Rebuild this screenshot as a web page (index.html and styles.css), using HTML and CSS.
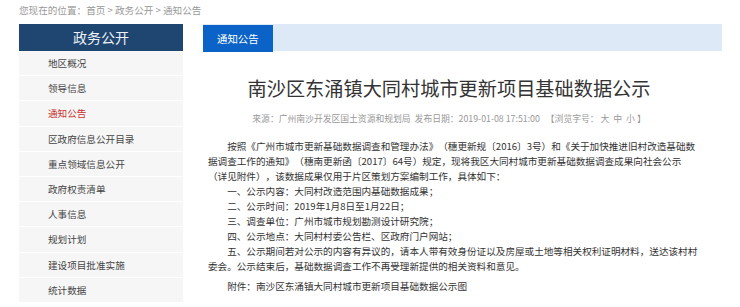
FILE: index.html
```html
<!DOCTYPE html>
<html lang="zh-CN">
<head>
  <meta charset="UTF-8" />
  <meta name="viewport" content="width=device-width, initial-scale=1.0"/>
  <title>通知公告 - 政务公开</title>
  <link rel="stylesheet" href="styles.css">
</head>
<body>

  <div class="page">
    <div class="crumb">您现在的位置：首页 &gt; 政务公开 &gt; 通知公告</div>

    <div class="wrap">
      <aside class="side">
        <div class="side-title">政务公开</div>
        <ul class="side-menu">
          <li><a href="#">地区概况</a></li>
          <li><a href="#">领导信息</a></li>
          <li><a href="#" class="active">通知公告</a></li>
          <li><a href="#">区政府信息公开目录</a></li>
          <li><a href="#">重点领域信息公开</a></li>
          <li><a href="#">政府权责清单</a></li>
          <li><a href="#">人事信息</a></li>
          <li><a href="#">规划计划</a></li>
          <li><a href="#">建设项目批准实施</a></li>
          <li><a href="#">统计数据</a></li>
        </ul>
      </aside>

      <main class="main">
        <div class="tabbar">
          <span class="tab">通知公告</span>
        </div>

        <div class="article">
          <h1>南沙区东涌镇大同村城市更新项目基础数据公示</h1>
          <div class="meta">
            来源：广州南沙开发区国土资源和规划局&nbsp;&nbsp;发布日期：2019-01-08 17:51:00&nbsp;&nbsp;&nbsp;【浏览字号：&nbsp;<a href="#">大</a>&nbsp;&nbsp;<a href="#">中</a>&nbsp;&nbsp;<a href="#">小</a>&nbsp;】
          </div>
          <div class="content">
            <p>按照《广州市城市更新基础数据调查和管理办法》（穗更新规〔2016〕3号）和《关于加快推进旧村改造基础数据调查工作的通知》（穗南更新函〔2017〕64号）规定，现将我区大同村城市更新基础数据调查成果向社会公示<br>（详见附件），该数据成果仅用于片区策划方案编制工作，具体如下：</p>
            <p>一、公示内容：大同村改造范围内基础数据成果；</p>
            <p>二、公示时间：2019年1月8日至1月22日；</p>
            <p>三、调查单位：广州市城市规划勘测设计研究院；</p>
            <p>四、公示地点：大同村村委公告栏、区政府门户网站；</p>
            <p>五、公示期间若对公示的内容有异议的，请本人带有效身份证以及房屋或土地等相关权利证明材料，送达该村村委会。公示结束后，基础数据调查工作不再受理新提供的相关资料和意见。</p>
            <p class="attach">附件：<a href="#">南沙区东涌镇大同村城市更新项目基础数据公示图</a></p>
          </div>
        </div>
      </main>
    </div>
  </div>

</body>
</html>
```

FILE: styles.css
```css
* { box-sizing: border-box; }
body {
  margin: 0;
  font-family: "Noto Sans CJK SC", "Microsoft YaHei", sans-serif;
  background: #fff;
  color: #333;
  text-spacing-trim: space-all;
}

a {
  color: inherit;
  text-decoration: none;
}

.page {
  width: 703px;
  margin-left: 19px;
}

.crumb {
  font-size: 9.6px;
  line-height: 20px;
  color: #999;
}

.wrap {
  display: flex;
  gap: 20px;
  margin-top: 4px;
}

/* left menu */
.side {
  width: 164px;
  flex-shrink: 0;
}

.side-title {
  height: 27px;
  line-height: 27px;
  background: #1f4670;
  color: #eef2f7;
  font-size: 14px;
  text-align: center;
}

.side-menu {
  list-style: none;
  margin: 0;
  padding: 0;
  background: #f6f6f6;
}

.side-menu li {
  border-bottom: 1px solid #fff;
}

.side-menu a {
  display: block;
  height: 24.2px;
  line-height: 24.2px;
  padding-left: 29px;
  font-size: 9.6px;
  color: #444;
}

.side-menu a.active {
  color: #c9302c;
}

/* right column */
.main {
  flex: 1;
}

.tabbar {
  height: 27px;
  background: #dde9f6;
}

.tab {
  display: inline-block;
  height: 27px;
  line-height: 27px;
  padding: 0 14px;
  background: #0b63c7;
  color: #fff;
  font-size: 10.4px;
}

.article {
  padding: 0 32px 0 5px;
}

.article h1 {
  margin: 23px 0 0;
  font-size: 19.2px;
  line-height: 28px;
  font-weight: normal;
  text-align: center;
  color: #333;
}

.meta {
  margin-top: 9px;
  font-size: 8.8px;
  line-height: 15px;
  color: #999;
  text-align: center;
}

.content {
  margin: 13px -9px 0 0;
  font-size: 9.6px;
  line-height: 15px;
  color: #333;
}

.content p {
  margin: 0;
  text-indent: 2em;
}

.content .attach {
  margin-top: 5px;
}
```
